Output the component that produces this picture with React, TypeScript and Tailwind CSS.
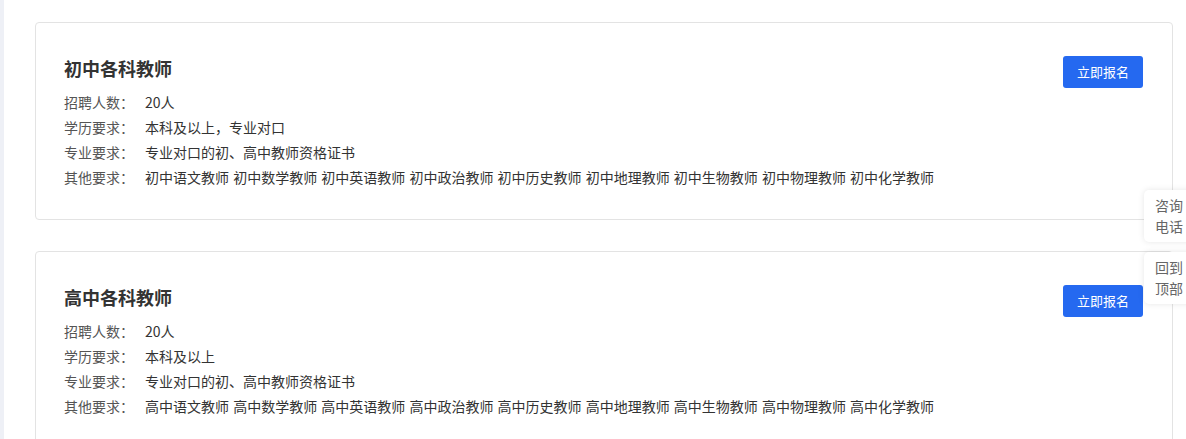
import React from "react";

const jobs = [
  {
    title: "初中各科教师",
    count: "20人",
    edu: "本科及以上，专业对口",
    major: "专业对口的初、高中教师资格证书",
    other: "初中语文教师 初中数学教师 初中英语教师 初中政治教师 初中历史教师 初中地理教师 初中生物教师 初中物理教师 初中化学教师",
  },
  {
    title: "高中各科教师",
    count: "20人",
    edu: "本科及以上",
    major: "专业对口的初、高中教师资格证书",
    other: "高中语文教师 高中数学教师 高中英语教师 高中政治教师 高中历史教师 高中地理教师 高中生物教师 高中物理教师 高中化学教师",
  },
];

const Row = ({ label, value }: { label: string; value: string }) => (
  <div className="flex h-[25px] items-center">
    <span className="w-[81px] shrink-0 text-[#555]">{label}</span>
    <span className="text-[#333] [word-spacing:1px]">{value}</span>
  </div>
);

const App = () => {
  return (
    <div
      className="relative h-[439px] w-[1186px] overflow-hidden bg-white"
      style={{ fontFamily: '"Noto Sans CJK SC", "Noto Sans", sans-serif' }}
    >
      <div className="flex h-full">
        <div className="w-[4px] shrink-0 bg-[#eef0f6]" />
        <div className="flex flex-1 flex-col gap-[31px] pl-[31px] pr-[13px] pt-[22px]">
          {jobs.map((job) => (
            <div
              key={job.title}
              className="flex h-[198px] shrink-0 items-start justify-between rounded-[4px] border border-[#e3e3e3] pl-[28px] pr-[29px] pt-[32px]"
            >
              <div className="text-[14px]">
                <h2 className="h-[27px] text-[18px] font-bold leading-[27px] text-[#333]">
                  {job.title}
                </h2>
                <div className="mt-[8px]">
                  <Row label="招聘人数：" value={job.count} />
                  <Row label="学历要求：" value={job.edu} />
                  <Row label="专业要求：" value={job.major} />
                  <Row label="其他要求：" value={job.other} />
                </div>
              </div>
              <button className="mt-[1px] h-[32px] w-[80px] rounded-[3px] bg-[#2569f0] text-[13px] text-white">
                立即报名
              </button>
            </div>
          ))}
        </div>
      </div>

      {/* floating side tabs */}
      <div className="absolute left-[1144px] top-[190px] flex flex-col gap-[10px]">
        <div className="flex h-[52px] w-[60px] flex-col justify-center rounded-l-[5px] bg-white pl-[11px] text-[14px] leading-[21px] text-[#666] shadow-[0_0_6px_rgba(0,0,0,0.1)]">
          <span>咨询</span>
          <span>电话</span>
        </div>
        <div className="flex h-[52px] w-[60px] flex-col justify-center rounded-l-[5px] bg-white pl-[11px] text-[14px] leading-[21px] text-[#666] shadow-[0_0_6px_rgba(0,0,0,0.1)]">
          <span>回到</span>
          <span>顶部</span>
        </div>
      </div>
    </div>
  );
};

export default App;
